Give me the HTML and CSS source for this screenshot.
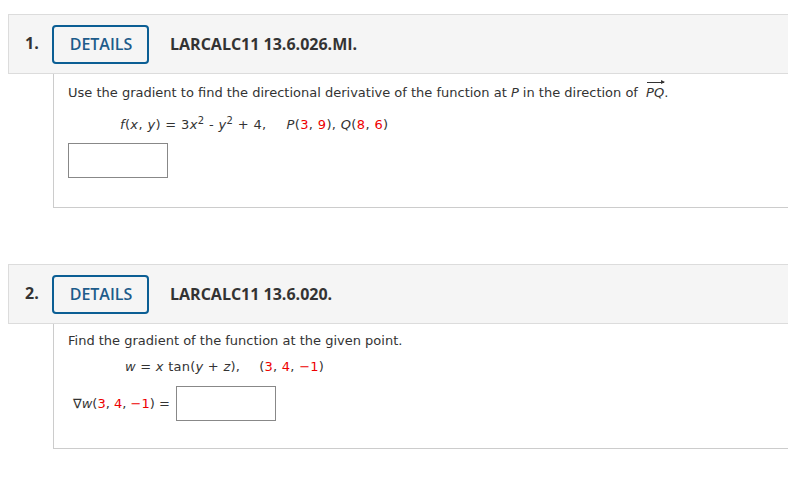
FILE: index.html
```html
<!DOCTYPE html>
<html>
<head>
<meta charset="utf-8">
<link rel="stylesheet" href="styles.css">
</head>
<body>
<div class="page">
  <section class="question">
    <div class="qhead">
      <span class="qnum">1.</span>
      <button class="details">DETAILS</button>
      <span class="qid">LARCALC11 13.6.026.MI.</span>
    </div>
    <div class="qbody">
      <p class="prompt">Use the gradient to find the directional derivative of the function at <i>P</i> in the direction of <span class="vec"><i>PQ</i></span>.</p>
      <p class="math m1"><i>f</i>(<i>x</i>, <i>y</i>) = 3<i>x</i><sup>2</sup> - <i>y</i><sup>2</sup> + 4,<span class="gap"></span><i>P</i>(<span class="r">3</span>, <span class="r">9</span>), <i>Q</i>(<span class="r">8</span>, <span class="r">6</span>)</p>
      <div class="answer a1"></div>
    </div>
  </section>

  <section class="question q2">
    <div class="qhead">
      <span class="qnum">2.</span>
      <button class="details">DETAILS</button>
      <span class="qid">LARCALC11 13.6.020.</span>
    </div>
    <div class="qbody b2">
      <p class="prompt">Find the gradient of the function at the given point.</p>
      <p class="math m2"><i>w</i> = <i>x</i> tan(<i>y</i> + <i>z</i>),<span class="gap"></span>(<span class="r">3</span>, <span class="r">4</span>, <span class="r">&minus;1</span>)</p>
      <div class="gradrow"><span>&nabla;<i>w</i>(<span class="r">3</span>, <span class="r">4</span>, <span class="r">&minus;1</span>) =</span><div class="answer"></div></div>
    </div>
  </section>
</div>
</body>
</html>
```

FILE: styles.css
```css
html, body { margin: 0; padding: 0; background: #fff; }
body { overflow: hidden; width: 788px; height: 490px; }
.page { padding: 14px 0 0 8px; }
.question { width: 800px; }
.q2 { margin-top: 56px; }
.qhead {
  display: flex; align-items: center;
  height: 58px;
  background: #f5f5f5;
  border: 1px solid #dcdcdc;
  border-right: none;
  font-family: "Open Sans", sans-serif;
  font-size: 16px;
}
.qnum { font-weight: 700; color: #333; margin-left: 16px; width: 28px; margin-top: -2px; }
.details {
  box-sizing: border-box;
  width: 97px; height: 39px;
  background: #fff0;
  border: 2px solid #0b5e94;
  border-radius: 4px;
  font-family: "Open Sans", sans-serif;
  font-size: 16px; font-weight: 600;
  color: #1d5c8b;
  padding: 0 0 0 1px;
  margin-left: -1px;
}
.qid { font-weight: 700; color: #333; margin-left: 21px; }
.qbody {
  margin-left: 45px;
  height: 134px;
  border-left: 1px solid #ccc;
  border-bottom: 1px solid #ccc;
  padding-left: 14px;
  font-family: "DejaVu Sans", Verdana, sans-serif;
  font-size: 13px;
  color: #333;
  box-sizing: border-box;
}
.b2 { height: 125px; }
.prompt { margin: 0; padding-top: 11px; line-height: 16px; }
.b2 .prompt { padding-top: 9px; }
.math { margin: 0; line-height: 16px; letter-spacing: 0.25px; }
.m1 { margin-left: 52px; margin-top: 16px; letter-spacing: 0.35px; }
.m2 { margin-left: 57px; margin-top: 10px; }
.gap { display: inline-block; width: 19px; }
.m1 .gap { width: 20px; }
sup { font-size: 10px; line-height: 0; vertical-align: 5px; }
.r { color: #e00; }
.vec { position: relative; display: inline-block; margin-left: 4px; }
.vec::before {
  content: ""; position: absolute; left: 1px; right: 0; top: -3px;
  border-top: 1px solid #333;
}
.vec::after {
  content: ""; position: absolute; right: -1px; top: -5px;
  border-left: 4px solid #333;
  border-top: 2.5px solid transparent; border-bottom: 2.5px solid transparent;
}
.answer {
  width: 98px; height: 33px;
  border: 1px solid #888;
  background: #fff;
}
.a1 { margin-top: 10px; }
.gradrow { display: flex; align-items: center; margin-top: 11px; margin-left: 5px; }
.gradrow .answer { margin-left: 6px; }
```
